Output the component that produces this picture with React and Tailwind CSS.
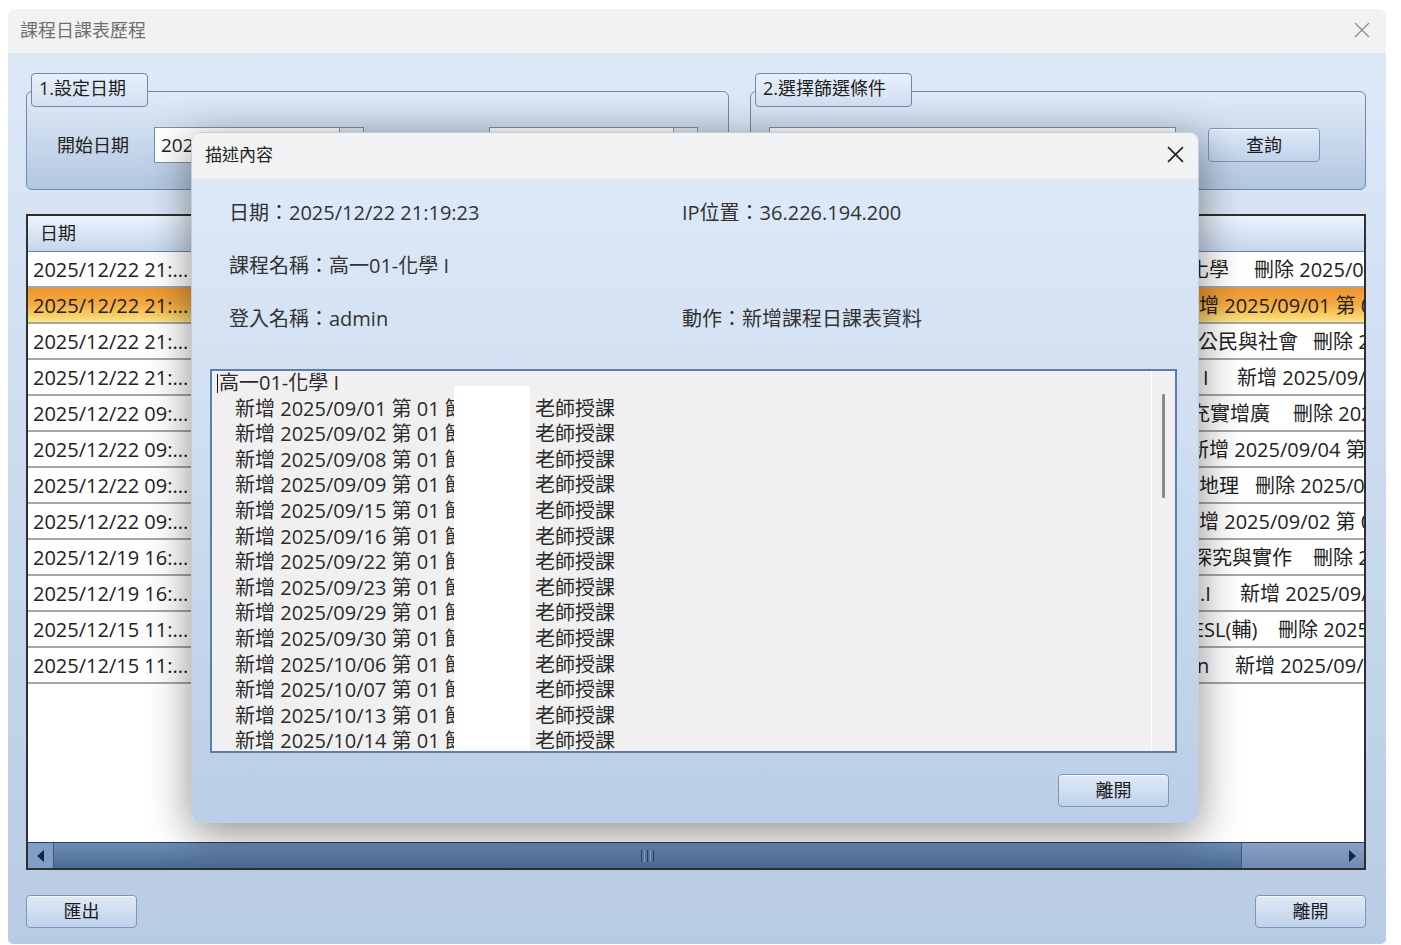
import React from "react";

function XIcon({ size = 16, color = "#222", stroke = 1.4 }) {
  return (
    <svg width={size} height={size} viewBox="0 0 16 16">
      <line x1="1" y1="1" x2="15" y2="15" stroke={color} strokeWidth={stroke} />
      <line x1="15" y1="1" x2="1" y2="15" stroke={color} strokeWidth={stroke} />
    </svg>
  );
}

const rows = [
  { d: "2025/12/22 21:...", ml: "ml-[3px]", w: "w-[65px]", a: "化學", b: "刪除 2025/09/01 第 01 節" },
  { d: "2025/12/22 21:...", ml: "ml-[13px]", w: "w-auto", a: "增 2025/09/01 第 01 節", b: "", hl: true },
  { d: "2025/12/22 21:...", ml: "ml-[12px]", w: "w-[115px]", a: "公民與社會", b: "刪除 2025/09/01" },
  { d: "2025/12/22 21:...", ml: "ml-[17px]", w: "w-[34px]", a: "I", b: "新增 2025/09/01" },
  { d: "2025/12/22 09:...", ml: "ml-[4px]", w: "w-[103px]", a: "充實增廣", b: "刪除 2025/09/01" },
  { d: "2025/12/22 09:...", ml: "ml-[3px]", w: "w-auto", a: "新增 2025/09/04 第 01 節", b: "" },
  { d: "2025/12/22 09:...", ml: "ml-[13px]", w: "w-[56px]", a: "地理", b: "刪除 2025/09/01" },
  { d: "2025/12/22 09:...", ml: "ml-[13px]", w: "w-auto", a: "增 2025/09/02 第 01 節", b: "" },
  { d: "2025/12/19 16:...", ml: "ml-[6px]", w: "w-[121px]", a: "探究與實作", b: "刪除 2025/09" },
  { d: "2025/12/19 16:...", ml: "ml-[14px]", w: "w-[40px]", a: ".I", b: "新增 2025/09/01" },
  { d: "2025/12/15 11:...", ml: "ml-[7px]", w: "w-[85px]", a: "ESL(輔)", b: "刪除 2025/09" },
  { d: "2025/12/15 11:...", ml: "ml-[11px]", w: "w-[38px]", a: "n", b: "新增 2025/09/01" },
];

const lines = [
  "2025/09/01", "2025/09/02", "2025/09/08", "2025/09/09", "2025/09/15", "2025/09/16",
  "2025/09/22", "2025/09/23", "2025/09/29", "2025/09/30", "2025/10/06", "2025/10/07",
  "2025/10/13", "2025/10/14", "2025/10/20",
];

function Btn({ children, className = "" }) {
  return (
    <div
      className={
        "w-[111px] h-[33px] rounded-[4px] border border-[#7d95b6] bg-gradient-to-b from-[#dfeaf8] to-[#bfd2ea] shadow-[inset_0_1px_0_rgba(255,255,255,0.7)] flex items-center justify-center text-[18px] text-[#1b1b1b] " +
        className
      }
    >
      {children}
    </div>
  );
}

function Modal() {
  return (
    <div className="absolute left-[191px] top-[132px] w-[1008px] h-[691px] rounded-[9px] overflow-hidden shadow-[0_10px_44px_rgba(0,0,0,0.45)] flex flex-col border border-[#c3cedb]">
      <div className="h-[46px] shrink-0 bg-[#f0f2f4] flex items-center justify-between pl-[13px] pr-[14px] pb-[3px]">
        <span className="text-[17px] text-[#222]">描述內容</span>
        <XIcon size={17} color="#222" stroke={1.6} />
      </div>
      <div className="flex-1 bg-gradient-to-b from-[#dde9f8] to-[#bacee7] flex flex-col pt-[21px]">
        <div className="pl-[37px] grid grid-cols-[453px_1fr] gap-y-[27px] text-[20px] leading-[26px] text-[#333]">
          <div>日期：2025/12/22 21:19:23</div>
          <div>IP位置：36.226.194.200</div>
          <div>課程名稱：高一01-化學 I</div>
          <div></div>
          <div>登入名稱：admin</div>
          <div>動作：新增課程日課表資料</div>
        </div>
        <div className="mt-[37px] ml-[18px] w-[967px] h-[384px] border-2 border-[#5f7dab] bg-[#f0f0f0] flex">
          <div className="relative flex-1 overflow-hidden text-[20px] leading-[25.6px] text-[#2b2b2b] -mt-[1px]">
            <div className="pl-[7px] whitespace-nowrap">高一01-化學 I</div>
            {lines.map((l) => (
              <div key={l} className="pl-[23px] whitespace-nowrap flex">
                <span className="inline-block w-[300px]">新增 {l} 第 01 節</span>
                <span>老師授課</span>
              </div>
            ))}
            <div className="absolute left-[5px] top-[4px] w-[1px] h-[19px] bg-[#111]" />
            <div className="absolute left-[242px] top-[16px] w-[76px] bottom-0 bg-white" />
          </div>
          <div className="relative w-[24px] border-l border-white">
            <div className="absolute top-[23px] left-[10px] w-[3px] h-[104px] rounded-[1px] bg-[#8a8a8a]" />
          </div>
        </div>
        <div className="mt-[21px] self-end mr-[29px]">
          <Btn>離開</Btn>
        </div>
      </div>
    </div>
  );
}

export default function App() {
  return (
    <div className="relative w-[1401px] h-[945px] bg-white overflow-hidden font-['Open_Sans','Noto_Sans_CJK_TC',sans-serif] text-[#222]">
      <div className="ml-[8px] mt-[9px] w-[1378px] h-[935px] flex flex-col rounded-t-[7px] rounded-b-[5px] overflow-hidden">
        <div className="h-[44px] shrink-0 bg-[#f2f2f2] flex items-center justify-between pl-[12px] pr-[16px] pb-[2px]">
          <span className="text-[18px] text-[#6f6f6f]">課程日課表歷程</span>
          <XIcon size={16} color="#8d8d8d" stroke={1.2} />
        </div>
        <div className="flex-1 bg-gradient-to-b from-[#dde9f7] to-[#b8cbe4] flex flex-col pl-[18px] pr-[20px] pt-[20px] pb-[16px]">
          {/* group boxes */}
          <div className="flex gap-[21px] h-[117px] shrink-0">
            <div className="relative w-[703px] pt-[18px]">
              <div className="h-[99px] rounded-[6px] border border-[#7089a9] bg-gradient-to-b from-[#dfeaf7] to-[#b3c7e1] flex items-start pt-[35px] pl-[30px]">
                <div className="w-[97px] h-[36px] flex items-center text-[18px] text-[#222]">開始日期</div>
                <div className="relative w-[210px] h-[36px] bg-white border border-[#7a8fab] flex items-center pl-[6px] text-[19px]">
                  2025/09/01
                  <div className="absolute right-0 top-0 w-[24px] h-[34px] bg-[#e4e9ef] border-l border-[#8a9bb2]" />
                </div>
                <div className="w-[125px] h-[36px] flex items-center justify-center text-[18px]">結束日期</div>
                <div className="relative w-[209px] h-[36px] bg-white border border-[#7a8fab]">
                  <div className="absolute right-0 top-0 w-[24px] h-[34px] bg-[#e4e9ef] border-l border-[#8a9bb2]" />
                </div>
              </div>
              <div className="absolute left-[5px] top-0 h-[34px] w-[117px] pl-[7px] pb-[3px] rounded-[4px] border border-[#7089a9] bg-gradient-to-b from-[#e8f0fa] to-[#d2e0f2] flex items-center text-[18px] text-[#1d1d1d]">
                1.設定日期
              </div>
            </div>
            <div className="relative w-[616px] pt-[18px]">
              <div className="h-[99px] rounded-[6px] border border-[#7089a9] bg-gradient-to-b from-[#dfeaf7] to-[#b3c7e1] flex items-start pt-[35px] pl-[18px]">
                <div className="w-[407px] h-[36px] bg-white border border-[#7a8fab]" />
                <Btn className="ml-[32px] mt-[1px] w-[112px] h-[34px]">查詢</Btn>
              </div>
              <div className="absolute left-[5px] top-0 h-[34px] w-[157px] pl-[7px] pb-[3px] rounded-[4px] border border-[#7089a9] bg-gradient-to-b from-[#e8f0fa] to-[#d2e0f2] flex items-center text-[18px] text-[#1d1d1d]">
                2.選擇篩選條件
              </div>
            </div>
          </div>

          {/* table */}
          <div className="mt-[24px] h-[656px] shrink-0 border-2 border-[#2f2f2f] bg-white flex flex-col">
            <div className="h-[36px] shrink-0 border-b border-[#6c86aa] bg-gradient-to-b from-[#edf3fb] to-[#c5d6ed] flex items-center pl-[12px] text-[18px] text-[#1d1d1d]">
              日期
            </div>
            {rows.map((r, i) => (
              <div
                key={i}
                className={
                  "h-[36px] shrink-0 border-b-2 border-[#a6a6a6] flex text-[20px] leading-[36px] whitespace-nowrap " +
                  (r.hl
                    ? "bg-[linear-gradient(to_bottom,#ee9630_0%,#f4a842_45%,#f9cf63_80%,#fde48a_100%)]"
                    : "bg-white")
                }
              >
                <div className="w-[164px] shrink-0 pl-[5px] overflow-hidden">{r.d}</div>
                <div className="w-[994px] shrink-0" />
                <div className="flex-1 overflow-hidden flex">
                  <span className={"inline-block shrink-0 " + r.ml + " " + r.w}>{r.a}</span>
                  {r.b && <span className="shrink-0">{r.b}</span>}
                </div>
              </div>
            ))}
            <div className="flex-1 bg-white" />
            <div className="h-[26px] shrink-0 border-t border-[#2c3d57] flex">
              <div className="w-[25px] bg-[#7f9dc5] flex items-center justify-center">
                <svg width="8" height="12" viewBox="0 0 8 12">
                  <polygon points="7,0 7,12 0,6" fill="#17263d" />
                </svg>
              </div>
              <div className="relative w-[1188px] bg-gradient-to-b from-[#6d8db7] to-[#4b6a94] border-l border-[#3f5878] flex items-center justify-center">
                <div className="flex gap-[2px]">
                  <div className="w-[1px] h-[12px] bg-[#34496a]" />
                  <div className="w-[1px] h-[12px] bg-[#8ea6c6]" />
                  <div className="w-[1px] h-[12px] bg-[#34496a]" />
                  <div className="w-[1px] h-[12px] bg-[#8ea6c6]" />
                  <div className="w-[1px] h-[12px] bg-[#34496a]" />
                </div>
              </div>
              <div className="flex-1 bg-gradient-to-b from-[#86a0c5] to-[#7089b1] border-l border-[#3f5878] flex items-center justify-end pr-[7px]">
                <svg width="8" height="12" viewBox="0 0 8 12">
                  <polygon points="0,0 0,12 7,6" fill="#17263d" />
                </svg>
              </div>
            </div>
          </div>

          <div className="mt-[25px] flex justify-between">
            <Btn>匯出</Btn>
            <Btn>離開</Btn>
          </div>
        </div>
      </div>
      <Modal />
    </div>
  );
}
